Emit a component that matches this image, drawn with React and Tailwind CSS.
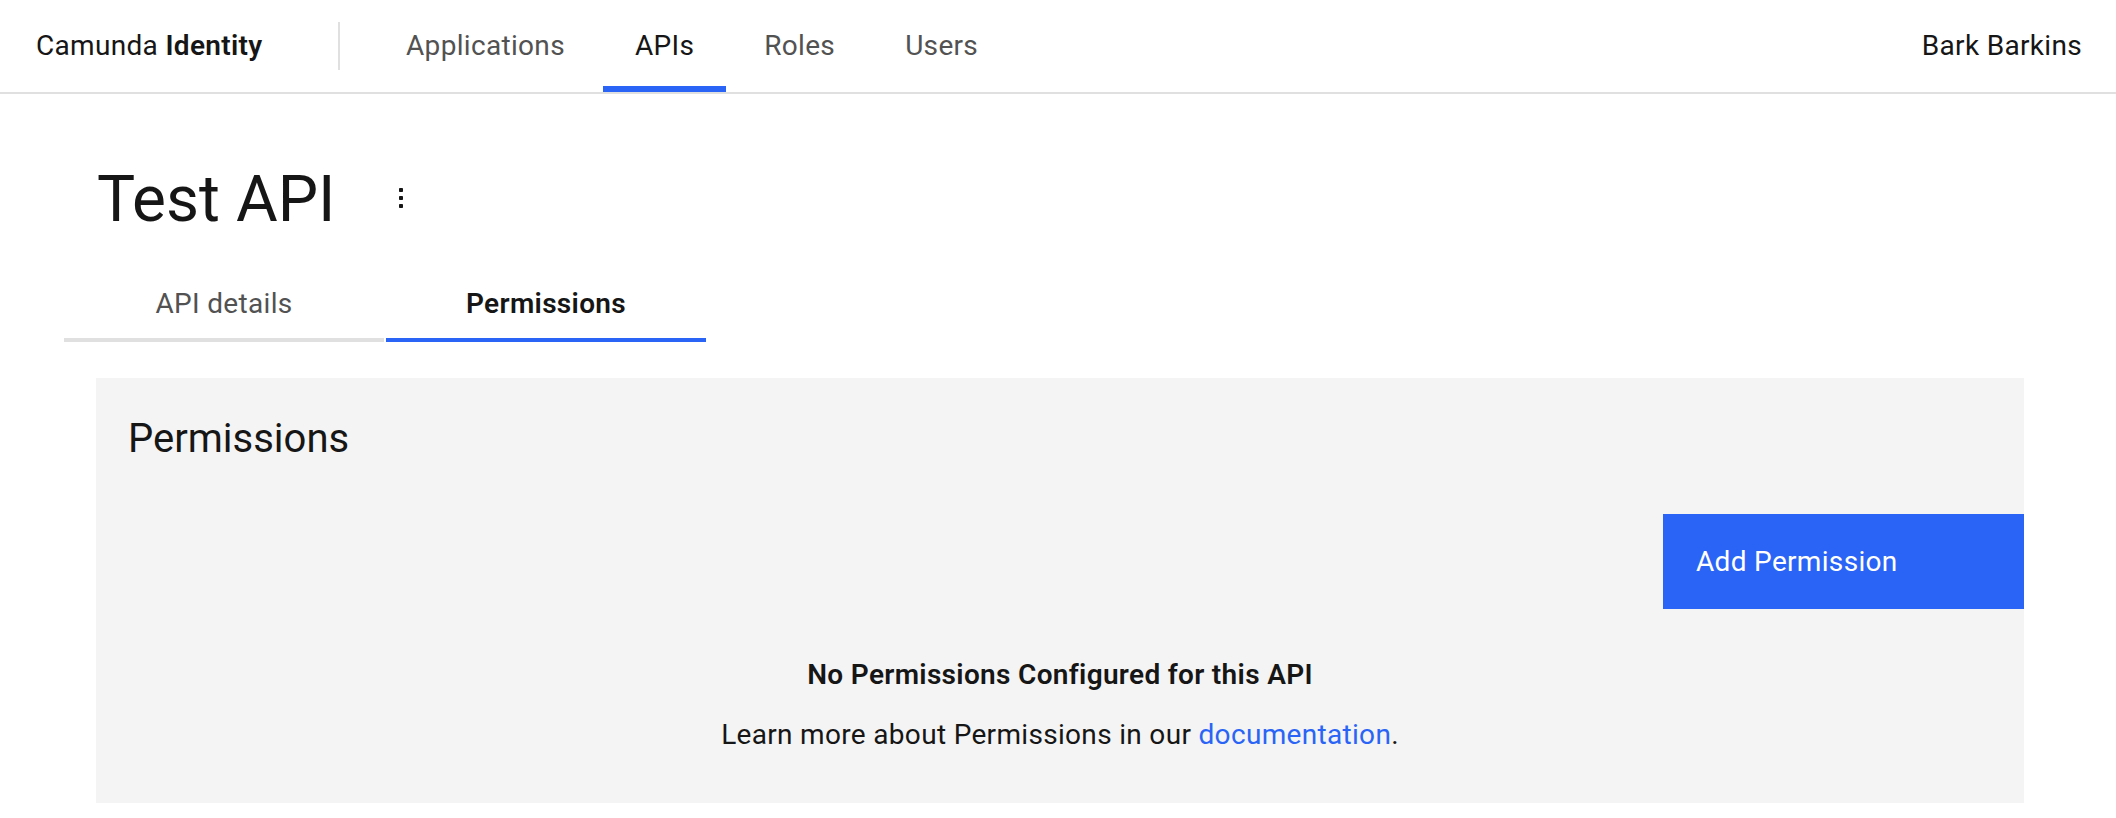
import React from "react";

function Dots() {
  return (
    <svg width="8" height="24" viewBox="0 0 8 24" aria-hidden="true">
      <rect x="2" y="0" width="4" height="4" rx="0.8" fill="#161616" />
      <rect x="2" y="8" width="4" height="4" rx="0.8" fill="#161616" />
      <rect x="2" y="16" width="4" height="4" rx="0.8" fill="#161616" />
    </svg>
  );
}

function NavItem({ label, active }) {
  return (
    <a
      className={
        "flex items-center px-[32px] pt-[6px] border-b-[6px] text-[28px] tracking-[0.32px] " +
        (active ? "border-[#2a64f6] text-[#161616]" : "border-transparent text-[#525252]")
      }
    >
      {label}
    </a>
  );
}

export default function App() {
  return (
    <div className="min-h-screen bg-white font-['Roboto','Liberation_Sans',sans-serif] text-[#161616]">
      <header className="flex h-[94px] items-stretch border-b-2 border-[#e0e0e0]">
        <div className="flex w-[338px] items-center pl-[36px] text-[28px] tracking-[0.32px] text-[#161616]">
          <span>
            Camunda <span className="font-semibold">Identity</span>
          </span>
        </div>
        <div className="h-[48px] w-[2px] self-center bg-[#e0e0e0]" />
        <nav className="ml-[34px] flex gap-[6px]">
          <NavItem label="Applications" />
          <NavItem label="APIs" active />
          <NavItem label="Roles" />
          <NavItem label="Users" />
        </nav>
        <div className="ml-auto flex items-center pr-[34px] text-[28px] tracking-[0.32px] text-[#161616]">
          Bark Barkins
        </div>
      </header>

      <main>
        <div className="mt-[66px] flex items-center pl-[97px]">
          <h1 className="w-[284px] text-[64px] leading-[80px] font-normal text-[#161616]">Test API</h1>
          <button className="flex h-[40px] w-[40px] items-center justify-center">
            <Dots />
          </button>
        </div>

        <div className="ml-[64px] mt-[30px] flex gap-[2px]">
          <div className="flex h-[72px] w-[320px] items-center justify-center border-b-4 border-[#e0e0e0] text-[28px] tracking-[0.32px] text-[#525252]">
            API details
          </div>
          <div className="flex h-[72px] w-[320px] items-center justify-center border-b-4 border-[#2a64f6] text-[28px] font-semibold tracking-[0.32px] text-[#161616]">
            Permissions
          </div>
        </div>

        <section className="ml-[96px] mt-[36px] flex h-[425px] w-[1928px] flex-col bg-[#f4f4f4]">
          <h2 className="pl-[32px] pt-[37px] text-[40px] leading-[48px] font-normal text-[#161616]">
            Permissions
          </h2>
          <button className="mt-[51px] flex h-[95px] w-[361px] items-center self-end bg-[#2a64f6] pl-[33px] text-[28px] tracking-[0.32px] text-white">
            Add Permission
          </button>
          <div className="mt-[46px] text-center text-[28px] leading-[40px] font-semibold tracking-[0.32px] text-[#161616]">
            No Permissions Configured for this API
          </div>
          <div className="mt-[20px] text-center text-[28px] leading-[40px] tracking-[0.32px] text-[#161616]">
            Learn more about Permissions in our{" "}
            <a className="text-[#2a64f6]">documentation</a>.
          </div>
        </section>
      </main>
    </div>
  );
}
